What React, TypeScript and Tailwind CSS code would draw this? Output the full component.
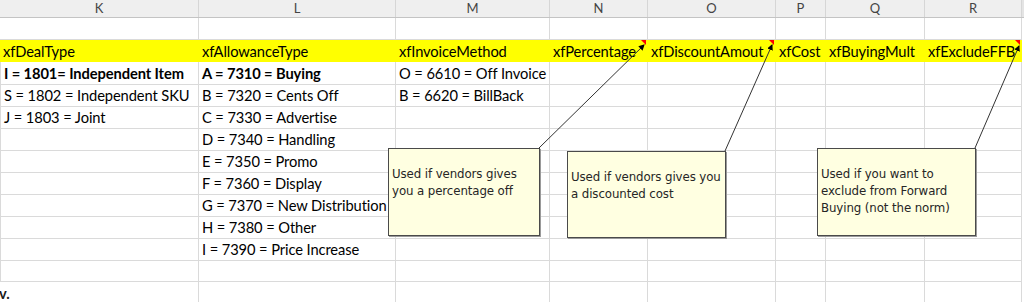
import React from 'react';

const colWidths = ['K', 'L', 'M', 'N', 'O', 'P', 'Q', 'R'];

type Cell = { text?: string; bold?: boolean; flag?: boolean };

const headerRow: Cell[] = [
  { text: 'xfDealType' },
  { text: 'xfAllowanceType' },
  { text: 'xfInvoiceMethod' },
  { text: 'xfPercentage', flag: true },
  { text: 'xfDiscountAmout', flag: true },
  { text: 'xfCost' },
  { text: 'xfBuyingMult' },
  { text: 'xfExcludeFFB', flag: true },
];

const bodyRows: Cell[][] = [
  [{ text: 'I = 1801= Independent Item', bold: true }, { text: 'A = 7310 = Buying', bold: true }, { text: 'O = 6610 = Off Invoice' }],
  [{ text: 'S = 1802 = Independent SKU' }, { text: 'B = 7320 = Cents Off' }, { text: 'B = 6620 = BillBack' }],
  [{ text: 'J = 1803 = Joint' }, { text: 'C = 7330 = Advertise' }],
  [{}, { text: 'D = 7340 = Handling' }],
  [{}, { text: 'E = 7350 = Promo' }],
  [{}, { text: 'F = 7360 = Display' }],
  [{}, { text: 'G = 7370 = New Distribution' }],
  [{}, { text: 'H = 7380 = Other' }],
  [{}, { text: 'I = 7390 = Price Increase' }],
  [],
];

const gridCols = 'grid grid-cols-[199px_197px_154px_98px_128px_50px_99px_97px_2px]';

const Comment: React.FC<{ className: string; lines: string[] }> = ({ className, lines }) => (
  <div
    className={`absolute bg-[#ffffe1] border border-[#4a4a4a] pl-[3px] pt-[17px] font-['DejaVu_Sans',sans-serif] text-[11.8px] leading-[17px] text-[#262626] shadow-[1px_1px_0_#9a9a9a] ${className}`}
  >
    {lines.map((l) => (
      <div key={l} className="whitespace-nowrap">
        {l}
      </div>
    ))}
  </div>
);

const App: React.FC = () => {
  return (
    <div className="relative w-[1024px] h-[302px] overflow-hidden bg-white font-['Lato',sans-serif] text-[14.7px] tracking-[-0.1px] text-black">
      {/* column letters */}
      <div className={`${gridCols} h-[18px] bg-[#efefef] border-b border-[#c4c4c4]`}>
        {colWidths.map((c) => (
          <div
            key={c}
            className="flex items-center justify-center border-r border-[#d6d6d6] text-[13px] leading-none tracking-normal text-[#444]"
          >
            {c}
          </div>
        ))}
        <div className="bg-[#e4e4e4]" />
      </div>

      {/* blank row */}
      <div className={`${gridCols} h-[22px]`}>
        {colWidths.map((c) => (
          <div key={c} className="border-r border-b border-[#dadada]" />
        ))}
        <div />
      </div>

      {/* yellow header row */}
      <div className={`${gridCols} h-[22px]`}>
        {headerRow.map((cell, i) => (
          <div key={i} className="relative flex items-center bg-[#ffff00] pl-[3px] whitespace-nowrap">
            {cell.text}
            {cell.flag && (
              <span className="absolute right-[2px] top-0 w-0 h-0 border-l-[5px] border-l-transparent border-t-[5px] border-t-[#ff0000]" />
            )}
          </div>
        ))}
        <div />
      </div>

      {bodyRows.map((row, r) => (
        <div key={r} className={`${gridCols} h-[22px]`}>
          {colWidths.map((c, i) => {
            const cell = row[i];
            return (
              <div
                key={c}
                className={`flex items-center pl-[3px] whitespace-nowrap border-r border-b border-[#dadada] ${
                  i === 0 ? 'border-l' : ''
                } ${cell?.bold ? 'font-bold' : ''}`}
              >
                {cell?.text}
              </div>
            );
          })}
          <div />
        </div>
      ))}

      {/* last partial row */}
      <div className={`${gridCols} h-[20px]`}>
        <div className="flex items-center border-r border-[#dadada] -ml-[1px] font-bold text-[#1a1a1a]">v.</div>
        {colWidths.slice(1).map((c) => (
          <div key={c} className="border-r border-[#dadada]" />
        ))}
        <div />
      </div>

      {/* comment connectors */}
      <svg className="absolute inset-0 pointer-events-none" width="1024" height="302">
        <defs>
          <marker id="tip" markerWidth="6" markerHeight="6" refX="5" refY="3" orient="auto">
            <path d="M0 0 L6 3 L0 6 Z" fill="#000" />
          </marker>
        </defs>
        <line x1="539" y1="148" x2="644" y2="45" stroke="#333" strokeWidth="1" markerEnd="url(#tip)" />
        <line x1="725" y1="151" x2="772" y2="45" stroke="#333" strokeWidth="1" markerEnd="url(#tip)" />
        <line x1="975" y1="148" x2="1019" y2="46" stroke="#333" strokeWidth="1" markerEnd="url(#tip)" />
      </svg>

      <Comment className="left-[388px] top-[148px] w-[152px] h-[88px]" lines={['Used if vendors gives', 'you a percentage off']} />
      <Comment className="left-[567px] top-[151px] w-[159px] h-[87px]" lines={['Used if vendors gives you', 'a discounted cost']} />
      <Comment
        className="left-[817px] top-[148px] w-[159px] h-[88px]"
        lines={['Used if you want to', 'exclude from Forward', 'Buying (not the norm)']}
      />
    </div>
  );
};

export default App;
